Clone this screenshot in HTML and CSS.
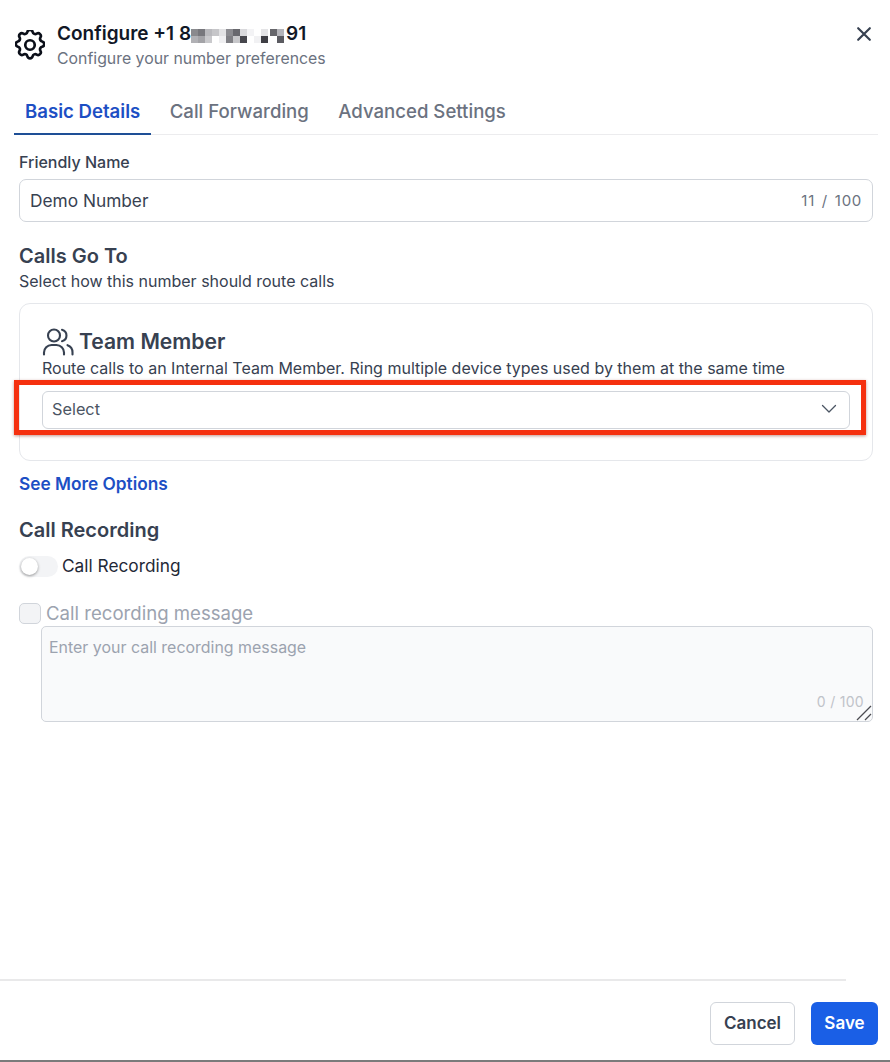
FILE: index.html
```html
<!DOCTYPE html>
<html lang="en">
<head>
<meta charset="utf-8">
<title>Configure number</title>
<link rel="stylesheet" href="styles.css">
</head>
<body>
<div class="modal">
  <header class="header">
    <svg class="gear" viewBox="2.5 2.5 19 19" fill="none" stroke="#0b0f19" stroke-width="1.7" stroke-linecap="round" stroke-linejoin="round">
      <path d="M10.33 3.76c.43-1.76 2.93-1.76 3.35 0a1.72 1.72 0 0 0 2.57 1.07c1.54-.94 3.3.82 2.37 2.37a1.72 1.72 0 0 0 1.06 2.57c1.76.43 1.76 2.93 0 3.35a1.72 1.72 0 0 0-1.07 2.57c.94 1.54-.82 3.3-2.37 2.37a1.72 1.72 0 0 0-2.57 1.06c-.43 1.76-2.93 1.76-3.35 0a1.72 1.72 0 0 0-2.57-1.07c-1.54.94-3.3-.82-2.37-2.37a1.72 1.72 0 0 0-1.06-2.57c-1.76-.43-1.76-2.93 0-3.35a1.72 1.72 0 0 0 1.07-2.57c-.94-1.54.82-3.3 2.37-2.37 1 .61 2.3.07 2.57-1.06z"/>
      <circle cx="12" cy="12" r="3"/>
    </svg>
    <div class="header-text">
      <div class="title">Configure +1 8<svg class="mosaic" viewBox="0 0 94 21" aria-hidden="true">
        <rect x="0" y="3" width="7" height="7" fill="#8a8a8e"/><rect x="7" y="3" width="7" height="7" fill="#77777c"/><rect x="14" y="3" width="7" height="7" fill="#b9b9bd"/><rect x="21" y="3" width="7" height="7" fill="#c6c6c9"/><rect x="28" y="3" width="7" height="7" fill="#e2e2e4"/><rect x="35" y="3" width="7" height="7" fill="#8b8b90"/><rect x="42" y="3" width="7" height="7" fill="#68686e"/><rect x="49" y="3" width="7" height="7" fill="#d9d9dc"/><rect x="56" y="3" width="7" height="7" fill="#f3f3f5"/><rect x="70" y="3" width="7" height="7" fill="#e4e4e6"/><rect x="79" y="3" width="7" height="7" fill="#66666b"/><rect x="86" y="3" width="7" height="7" fill="#b5b5ba"/>
        <rect x="0" y="10" width="7" height="7" fill="#b1b1b5"/><rect x="7" y="10" width="7" height="7" fill="#a3a3a7"/><rect x="14" y="10" width="7" height="7" fill="#c9c9cc"/><rect x="28" y="10" width="7" height="7" fill="#efeff1"/><rect x="35" y="10" width="7" height="7" fill="#7f7f84"/><rect x="42" y="10" width="7" height="7" fill="#c7c7ca"/><rect x="49" y="10" width="7" height="7" fill="#47474d"/><rect x="63" y="10" width="7" height="7" fill="#f1f1f3"/><rect x="70" y="10" width="7" height="7" fill="#3f3f45"/><rect x="86" y="10" width="7" height="7" fill="#5b5b61"/>
      </svg>91</div>
      <div class="subtitle">Configure your number preferences</div>
    </div>
    <svg class="close" viewBox="0 0 24 24" fill="none" stroke="#374151" stroke-width="2.6" stroke-linecap="round"><path d="M5 5l14 14M19 5L5 19"/></svg>
  </header>

  <nav class="tabs">
    <a class="tab tab-active">Basic Details</a>
    <a class="tab">Call Forwarding</a>
    <a class="tab">Advanced Settings</a>
  </nav>

  <main class="form">
    <label class="field-label">Friendly Name</label>
    <div class="input">
      <span>Demo Number</span>
      <span class="count">11 / 100</span>
    </div>

    <h2 class="section-title calls-title">Calls Go To</h2>
    <p class="section-sub">Select how this number should route calls</p>

    <section class="card">
      <div class="card-head">
        <svg class="users" viewBox="0 0 32 28" fill="none" stroke="#374151" stroke-width="2.1" stroke-linecap="round" stroke-linejoin="round">
          <circle cx="12" cy="7.5" r="6"/>
          <path d="M2 26.5v-2a7.5 7.5 0 0 1 7.5-7.5h5a7.5 7.5 0 0 1 7.5 7.5v2"/>
          <path d="M20 1.7a6 6 0 0 1 0 11.6"/>
          <path d="M25.5 17.2a7.5 7.5 0 0 1 5 7.1v2.2"/>
        </svg>
        <h3 class="card-title">Team Member</h3>
      </div>
      <p class="card-desc">Route calls to an Internal Team Member. Ring multiple device types used by them at the same time</p>
      <div class="select">
        <span>Select</span>
        <svg class="chevron" viewBox="0 0 16 10" fill="none" stroke="#4b5563" stroke-width="1.3" stroke-linecap="round" stroke-linejoin="round"><path d="M1.5 1.5L8 8l6.5-6.5"/></svg>
      </div>
      <div class="highlight"></div>
    </section>

    <a class="more">See More Options</a>

    <h2 class="section-title rec-title">Call Recording</h2>
    <div class="toggle-row">
      <span class="toggle"><span class="knob"></span></span>
      <span class="toggle-label">Call Recording</span>
    </div>

    <div class="check-row">
      <span class="checkbox"></span>
      <span class="check-label">Call recording message</span>
    </div>
    <div class="textarea">
      <span class="placeholder">Enter your call recording message</span>
      <span class="area-count">0 / 100</span>
      <svg class="grip" viewBox="0 0 16 16" fill="none" stroke="#4b4b50" stroke-width="1.3"><path d="M1 15L15 1M9 15l6-6"/></svg>
    </div>
  </main>

  <footer class="footer">
    <div class="footer-line"></div>
    <div class="actions">
      <button class="btn btn-cancel">Cancel</button>
      <button class="btn btn-save">Save</button>
    </div>
  </footer>
</div>
</body>
</html>
```
FILE: styles.css
```css
* { box-sizing: border-box; }
html, body { margin: 0; padding: 0; background: #fff; }
body { font-family: Inter, "Liberation Sans", sans-serif; color: #111827; }
.modal { width: 890px; height: 1062px; display: flex; flex-direction: column; border-bottom: 2px solid #7b7b7b; overflow: hidden; }

.header { display: flex; align-items: flex-start; padding: 21px 16px 0 15px; height: 92px; }
.gear { width: 30px; height: 30px; margin-top: 9px; flex: none; }
.header-text { margin-left: 12px; flex: 1; }
.title { font-size: 19px; font-weight: 600; line-height: 24px; color: #111827; display: flex; align-items: center; }
.mosaic { width: 94px; height: 21px; margin: 5px 1px 0 0; flex: none; }
.subtitle { font-size: 15.85px; line-height: 24px; color: #6b7280; }
.close { width: 20px; height: 20px; margin-top: 3px; flex: none; }

.tabs { display: flex; margin: 0 12px 0 14px; height: 43px; border-bottom: 1px solid #ececee; }
.tab { display: block; height: 43px; padding: 6px 11px 0; font-size: 18.6px; line-height: 27px; font-weight: 500; color: #6b7280; margin-right: 7.5px; }
.tab-active { color: #1d4fc4; font-weight: 600; border-bottom: 2px solid #1e4f96; }

.form { padding: 16px 17px 0 19px; flex: 1; display: flex; flex-direction: column; }
.field-label { font-size: 16px; line-height: 22px; font-weight: 500; color: #374151; }
.input { margin-top: 6px; height: 43px; border: 1px solid #d1d5db; border-radius: 7px; display: flex; align-items: center; justify-content: space-between; padding: 0 10px; font-size: 17.3px; color: #374151; }
.count { font-size: 15px; color: #6b7280; letter-spacing: .7px; word-spacing: 2px; }

.section-title { margin: 0; font-size: 20px; line-height: 26px; font-weight: 600; color: #374151; }
.calls-title { margin-top: 21px; }
.section-sub { margin: 1px 0 0; font-size: 16px; line-height: 22px; color: #374151; }

.card { position: relative; margin-top: 11px; height: 158px; border: 1px solid #e5e7eb; border-radius: 11px; padding: 22px 22px 0; }
.card-head { display: flex; align-items: center; height: 31px; }
.users { width: 32px; height: 28px; flex: none; }
.card-title { margin: 0 0 0 5px; font-size: 21.1px; line-height: 28px; font-weight: 600; color: #374151; }
.card-desc { margin: 0; font-size: 16px; line-height: 22px; color: #374151; white-space: nowrap; }
.select { margin-top: 12px; height: 38px; border: 1px solid #d1d5db; border-radius: 6px; display: flex; align-items: center; justify-content: space-between; padding: 0 12px 2px 9px; font-size: 16.3px; color: #4b5563; }
.chevron { width: 16px; height: 10px; }
.highlight { position: absolute; left: -6px; top: 76px; width: 852px; height: 55px; border: 5px solid #f5300f; box-shadow: 0 1px 3px rgba(120,20,0,.45); pointer-events: none; }

.more { margin-top: 11px; font-size: 17.3px; line-height: 24px; font-weight: 600; color: #1d4fc4; }
.rec-title { margin-top: 21px; }

.toggle-row { display: flex; align-items: center; margin-top: 12px; height: 22px; }
.toggle { position: relative; width: 39px; height: 21px; background: #f3f4f6; border-radius: 11px; flex: none; }
.knob { position: absolute; left: 2px; top: 2px; width: 17px; height: 17px; border-radius: 50%; background: #fff; box-shadow: 0 1px 3px rgba(0,0,0,.4); }
.toggle-label { margin: 0 0 2px 4px; font-size: 17.3px; color: #1f2937; }

.check-row { display: flex; align-items: center; margin-top: 25px; height: 22px; }
.checkbox { width: 22px; height: 21px; background: #f3f4f6; border: 1px solid #d1d5db; border-radius: 5px; flex: none; }
.check-label { margin-left: 5px; font-size: 18.6px; color: #9ca3af; }

.textarea { position: relative; margin: 2px 0 0 22px; height: 96px; background: #f9fafb; border: 1px solid #d1d5db; border-radius: 5px; padding: 10px 7px; font-size: 15.95px; line-height: 22px; color: #9ca3af; }
.placeholder { display: block; }
.area-count { position: absolute; right: 8px; bottom: 9px; font-size: 14px; line-height: 20px; color: #c0c3c9; letter-spacing: .3px; }
.grip { position: absolute; right: 0; bottom: 0; width: 16px; height: 16px; }

.footer { flex: none; height: 81px; }
.footer-line { width: 846px; height: 2px; background: #e9e9ea; }
.actions { display: flex; justify-content: flex-end; gap: 16px; padding: 21px 12px 0 0; }
.btn { height: 43px; border-radius: 6px; padding: 0 0 2px; font-family: inherit; font-size: 17px; font-weight: 600; }
.btn-cancel { width: 85px; background: #fff; border: 1px solid #d1d5db; color: #374151; }
.btn-save { width: 67px; background: #1a5fe6; border: 0; color: #fff; }
```
